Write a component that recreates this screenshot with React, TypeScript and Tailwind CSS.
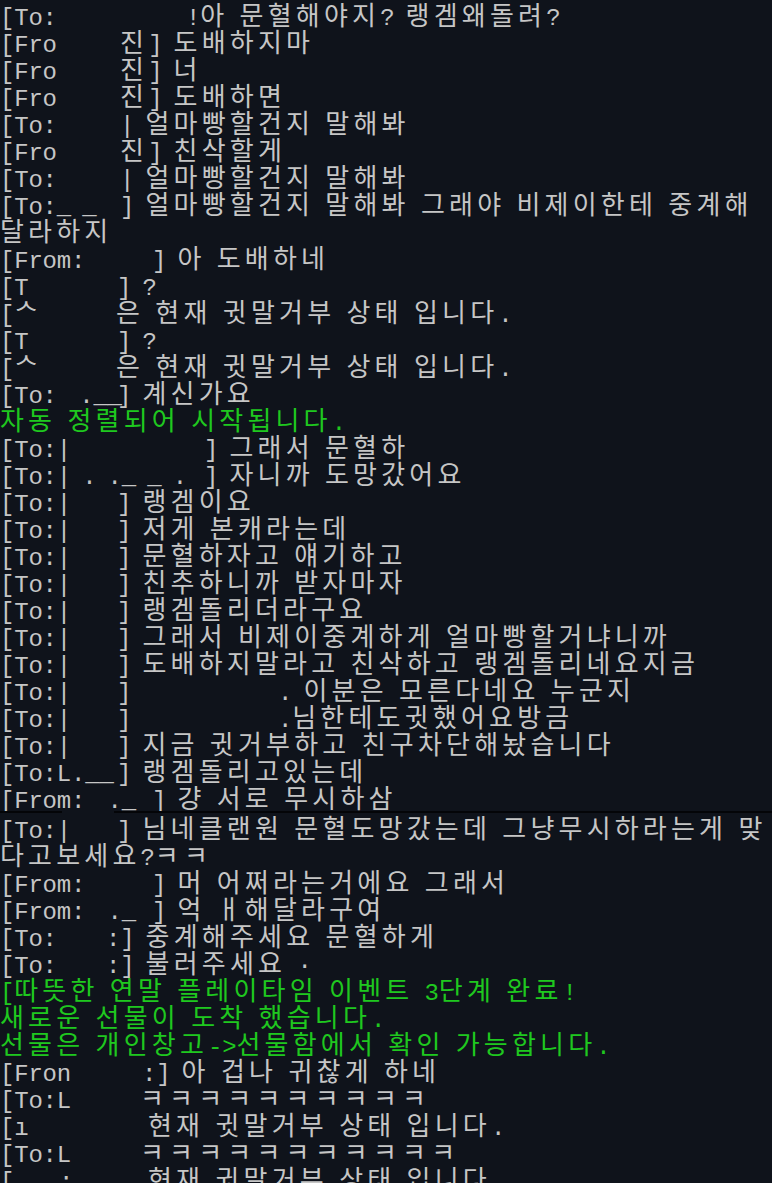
type Seg = string | [string, number];
type Line = { segs: Seg[]; green?: boolean; rule?: boolean };

const L = (...segs: Seg[]): Line => ({ segs });
const G = (text: string): Line => ({ segs: [text], green: true });

const kk = (n: number) => Array.from({ length: n }, () => 'ㅋ').join('');

const lines: Line[] = [
    L(['[To:', 186], '!아 문혈해야지? 랭겜왜돌려?'),
    L(['[Fro', 120], '진] 도배하지마'),
    L(['[Fro', 120], '진] 너'),
    L(['[Fro', 120], '진] 도배하면'),
    L(['[To:', 120], '| 얼마빵할건지 말해봐'),
    L(['[Fro', 120], '진] 친삭할게'),
    L(['[To:', 120], '| 얼마빵할건지 말해봐'),
    L(['[To:_ _', 120], '] 얼마빵할건지 말해봐 그래야 비제이한테 중계해'),
    L('달라하지'),
    L(['[From:', 152], '] 아 도배하네'),
    L(['[T', 117], '] ?'),
    L(['[ᄉ', 116], '은 현재 귓말거부 상태 입니다.'),
    L(['[T', 117], '] ?'),
    L(['[ᄉ', 116], '은 현재 귓말거부 상태 입니다.'),
    L(['[To:  .__', 117], '] 계신가요'),
    G('자동 정렬되어 시작됩니다.'),
    L(['[To:|', 204], '] 그래서 문혈하'),
    L(['[To:| . ._ _ .', 204], '] 자니까 도망갔어요'),
    L(['[To:|', 117], '] 랭겜이요'),
    L(['[To:|', 117], '] 저게 본캐라는데'),
    L(['[To:|', 117], '] 문혈하자고 얘기하고'),
    L(['[To:|', 117], '] 친추하니까 받자마자'),
    L(['[To:|', 117], '] 랭겜돌리더라구요'),
    L(['[To:|', 117], '] 그래서 비제이중계하게 얼마빵할거냐니까'),
    L(['[To:|', 117], '] 도배하지말라고 친삭하고 랭겜돌리네요지금'),
    L(['[To:|', 117], [']', 161], '. 이분은 모른다네요 누군지'),
    L(['[To:|', 117], [']', 161], '.님한테도귓했어요방금'),
    L(['[To:|', 117], '] 지금 귓거부하고 친구차단해놨습니다'),
    L(['[To:L.__', 117], '] 랭겜돌리고있는데'),
    L(['[From:  ._', 152], '] 걍 서로 무시하삼'),
    { segs: [], rule: true },
    L(['[To:|', 117], '] 님네클랜원 문혈도망갔는데 그냥무시하라는게 맞'),
    L('다고보세요?ㅋㅋ'),
    L(['[From:', 152], '] 머 어쩌라는거에요 그래서'),
    L(['[From:  ._', 152], '] 억 ㅐ해달라구여'),
    L(['[To:', 106], ':] 중계해주세요 문혈하게'),
    L(['[To:', 106], ':] 불러주세요 ·'),
    G('[따뜻한 연말 플레이타임 이벤트 3단계 완료!'),
    G('새로운 선물이 도착 했습니다.'),
    G('선물은 개인창고->선물함에서 확인 가능합니다.'),
    L(['[Fron', 142], ':] 아 겁나 귀찮게 하네'),
    L(['[To:L', 140], kk(10)),
    L(['[ı', 148], '현재 귓말거부 상태 입니다.'),
    L(['[To:L', 140], kk(11)),
    L(['[    :', 148], '현재 귓말거부 상태 입니다.'),
];

// Korean runs keep the CJK face; everything else goes half-width mono like the game font
const KO = /([\u1100-\u11ff\u3131-\u318e\uac00-\ud7a3]+)/;

function Runs({ text }: { text: string }) {
    return (
        <>
            {text.split(KO).filter(Boolean).map((part, i) => {
                if (!KO.test(part)) {
                    return (
                        <span key={i} className="font-['Liberation_Mono',monospace] text-[24px] tracking-[-0.2px] [word-spacing:-3px]">
                            {part}
                        </span>
                    );
                }
                // compatibility jamo (ㅋ) sit a little narrower, pad them out to the cell
                if (/^ㅋ+$/.test(part)) {
                    return (
                        <span key={i} className="font-['Noto_Sans_CJK_KR',sans-serif] text-[26px] tracking-[5.2px]">
                            {part}
                        </span>
                    );
                }
                return (
                    <span key={i} className="font-['Noto_Sans_CJK_KR',sans-serif] text-[26px] tracking-[4.2px]">
                        {part}
                    </span>
                );
            })}
        </>
    );
}

export default function App() {
    return (
        <div className="h-[1183px] w-[772px] overflow-hidden bg-[#0f131b] font-['Noto_Sans_CJK_KR',sans-serif] text-[26px] leading-[27px] text-[#c6c6c6]">
            {lines.map((line, i) =>
                line.rule ? (
                    <div key={i} className="flex h-[3px] items-center">
                        <div className="h-[2px] w-[62px] bg-[#040508]" />
                        <div className="w-[52px]" />
                        <div className="h-[2px] flex-1 bg-[#040508]" />
                    </div>
                ) : (
                    <div
                        key={i}
                        className={`h-[27px] whitespace-pre ${line.green ? 'text-[#1fc81f]' : ''}`}
                    >
                        {line.segs.map((s, j) =>
                            typeof s === 'string' ? (
                                <Runs key={j} text={s} />
                            ) : (
                                <span key={j} className="inline-block align-top" style={{ width: s[1] }}>
                                    <Runs text={s[0]} />
                                </span>
                            )
                        )}
                    </div>
                )
            )}
        </div>
    );
}
